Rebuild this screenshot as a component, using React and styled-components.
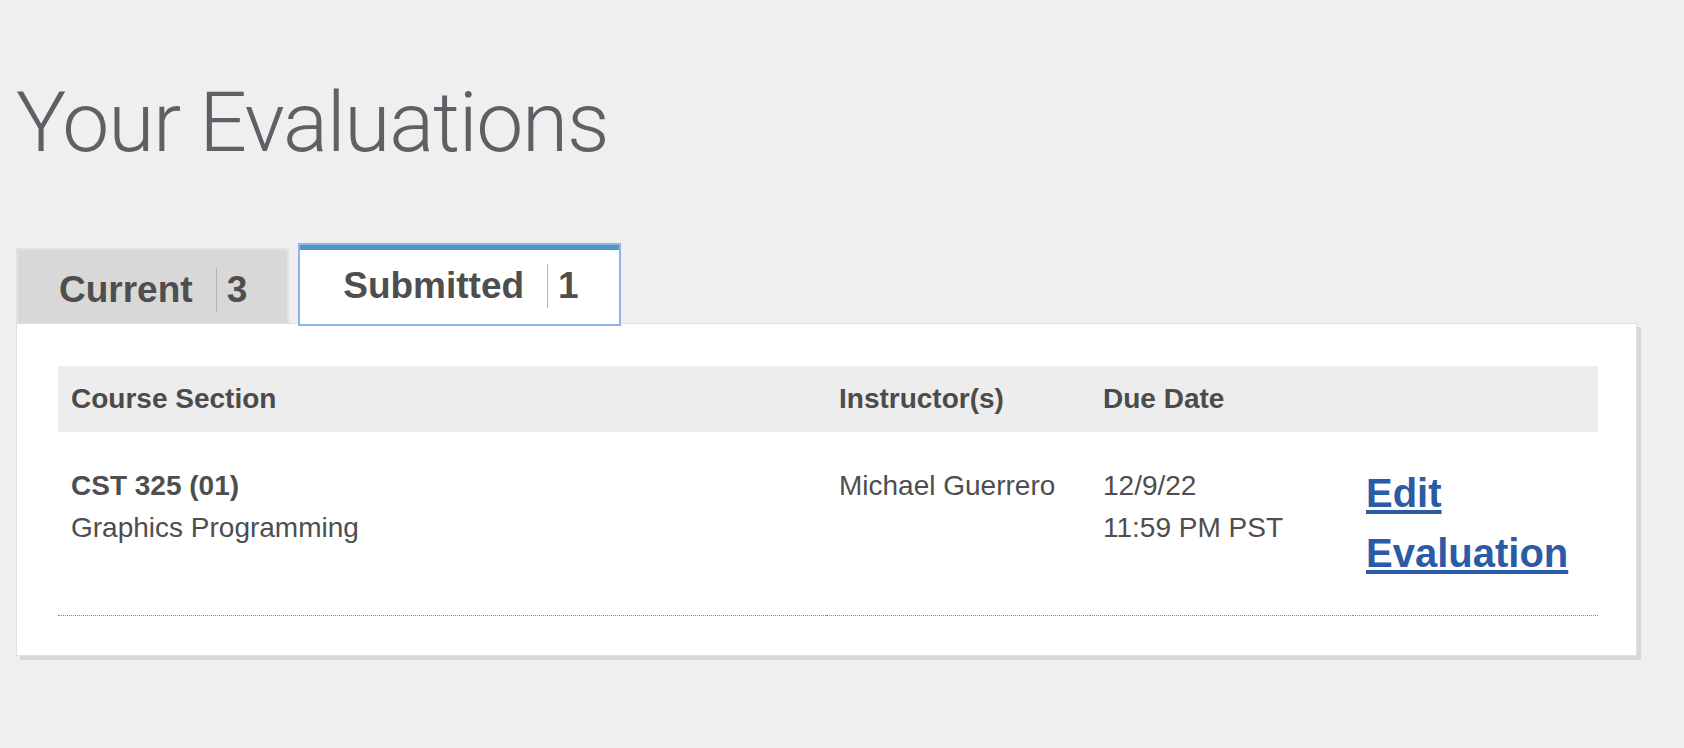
import React from 'react'
import styled, { createGlobalStyle } from 'styled-components'

const GlobalStyle = createGlobalStyle`
  body {
    margin: 0;
    background: #efefef;
    font-family: "Liberation Sans", Arial, sans-serif;
    color: #4e4e4e;
  }
`

const Page = styled.main`
  padding: 81px 47px 40px 16px;
`

const Title = styled.h1`
  margin: 0 0 80px 0;
  font-family: Roboto, "Liberation Sans", sans-serif;
  font-weight: 300;
  font-size: 84px;
  line-height: 84px;
  letter-spacing: -1.3px;
  color: #5f6065;
`

const TabList = styled.div`
  display: flex;
  align-items: flex-end;
  gap: 11px;
  position: relative;
  z-index: 1;
`

const Tab = styled.button`
  display: flex;
  align-items: flex-start;
  box-sizing: border-box;
  margin: 0;
  font: inherit;
  color: #4e4e4e;
  cursor: pointer;
  height: ${p => (p.$active ? '79px' : '75px')};
  margin-bottom: ${p => (p.$active ? '-1px' : '0')};
  padding: ${p => (p.$active ? '14px 40px 0 43px' : '18px 40px 0 41px')};
  background: ${p => (p.$active ? '#fff' : '#d8d8d8')};
  border: ${p => (p.$active ? 'none' : '2px solid #e2e2e2')};
  border-bottom: none;
  border-top: ${p => (p.$active ? '5px solid #4a97c4' : '2px solid #e2e2e2')};
  box-shadow: ${p => (p.$active ? '0 0 0 2px #8db1f1' : 'none')};
`

const TabLabel = styled.span`
  font-size: 37px;
  font-weight: 700;
  line-height: 44px;
  margin-right: 23px;
`

const TabCount = styled.span`
  font-size: 37px;
  font-weight: 700;
  line-height: 44px;
  padding-left: 10px;
  border-left: 1px solid #b3b3b3;
`

const Card = styled.section`
  background: #fff;
  border: 1px solid #e0e0e0;
  box-shadow: 4px 4px 0 #d7d7d7;
  padding: 42px 38px 39px 41px;
`

const Table = styled.div`
  display: grid;
  grid-template-columns: 768px 264px 263px 1fr;
`

const HeadCell = styled.div`
  background: #ededed;
  height: 66px;
  line-height: 66px;
  padding: 0 13px;
  font-size: 28px;
  font-weight: 700;
  color: #4b4b4b;
`

const Cell = styled.div`
  padding: 33px 13px 30px;
  font-size: 28px;
  line-height: 42px;
  color: #4e4e4e;
  border-bottom: 1px dotted #888;
`

const ActionCell = styled(Cell)`
  padding-top: 31px;
  padding-bottom: 32px;
  font-size: 40px;
  line-height: 60px;
`

const Code = styled.div`
  font-weight: 700;
`

const EditLink = styled.a`
  font-weight: 700;
  color: #2b5ba7;
  text-decoration: underline;
  text-decoration-thickness: 4px;
  text-underline-offset: 3px;
`

const rows = [
  {
    code: 'CST 325 (01)',
    name: 'Graphics Programming',
    instructor: 'Michael Guerrero',
    date: '12/9/22',
    time: '11:59 PM PST',
  },
]

export default function App() {
  return (
    <>
      <GlobalStyle />
      <Page>
        <Title>Your Evaluations</Title>
        <TabList>
          <Tab>
            <TabLabel>Current</TabLabel>
            <TabCount>3</TabCount>
          </Tab>
          <Tab $active>
            <TabLabel>Submitted</TabLabel>
            <TabCount>1</TabCount>
          </Tab>
        </TabList>
        <Card>
          <Table>
            <HeadCell>Course Section</HeadCell>
            <HeadCell>Instructor(s)</HeadCell>
            <HeadCell>Due Date</HeadCell>
            <HeadCell />
            {rows.map(r => (
              <React.Fragment key={r.code}>
                <Cell>
                  <Code>{r.code}</Code>
                  <div>{r.name}</div>
                </Cell>
                <Cell>{r.instructor}</Cell>
                <Cell>
                  <div>{r.date}</div>
                  <div>{r.time}</div>
                </Cell>
                <ActionCell>
                  <EditLink href="#">Edit Evaluation</EditLink>
                </ActionCell>
              </React.Fragment>
            ))}
          </Table>
        </Card>
      </Page>
    </>
  )
}
